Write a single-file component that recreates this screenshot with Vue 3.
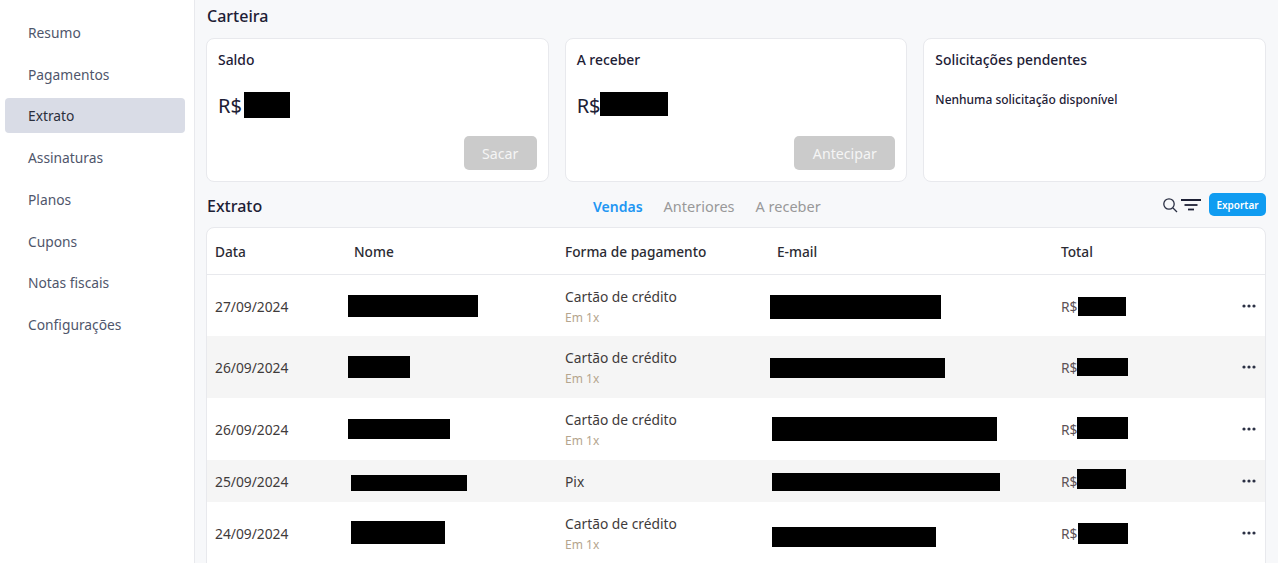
<template>
  <div class="page">
    <aside class="side">
      <a v-for="item in menu" :key="item" class="nav" :class="{ on: item === 'Extrato' }">{{ item }}</a>
    </aside>
    <main class="main">
      <h2 class="title">Carteira</h2>
      <section class="cards">
        <div class="card">
          <h3>Saldo</h3>
          <div class="amount"><span>R$</span><i class="redact saldo"></i></div>
          <button class="disabled sacar">Sacar</button>
        </div>
        <div class="card">
          <h3>A receber</h3>
          <div class="amount"><span>R$</span><i class="redact receber"></i></div>
          <button class="disabled antecipar">Antecipar</button>
        </div>
        <div class="card">
          <h3>Solicitações pendentes</h3>
          <p class="none">Nenhuma solicitação disponível</p>
        </div>
      </section>
      <div class="bar">
        <h2 class="title sub">Extrato</h2>
        <nav class="tabs">
          <span class="active">Vendas</span><span>Anteriores</span><span>A receber</span>
        </nav>
        <div class="tools">
          <svg width="16" height="16" viewBox="0 0 16 16" fill="none" stroke="#2b3044" stroke-width="1.3"><circle cx="7" cy="7" r="5.2"/><path d="M11 11l4 4"/></svg>
          <svg class="filter" width="20" height="12" viewBox="0 0 20 12" fill="none" stroke="#1d2035"><path d="M0 1h20" stroke-width="2"/><path d="M3.5 6h13" stroke-width="1.8"/><path d="M7 10.5h6" stroke-width="1.8"/></svg>
          <button class="export">Exportar</button>
        </div>
      </div>
      <section class="table">
        <div class="row head">
          <div class="c-date">Data</div>
          <div class="c-name head-name">Nome</div>
          <div class="c-pay">Forma de pagamento</div>
          <div class="c-mail head-mail">E-mail</div>
          <div class="c-total head-total">Total</div>
          <div class="c-more"></div>
        </div>
        <div v-for="(r, i) in rows" :key="i" class="row" :class="{ alt: i % 2 === 1, short: !r.sub, first: i === 0 }">
          <div class="c-date">{{ r.date }}</div>
          <div class="c-name"><i class="redact" :style="box(r.name)"></i></div>
          <div class="c-pay">
            <div>{{ r.pay }}</div>
            <div v-if="r.sub" class="subline">{{ r.sub }}</div>
          </div>
          <div class="c-mail"><i class="redact" :style="box(r.mail)"></i></div>
          <div class="c-total"><span class="rs">R$</span><i class="redact" :style="box(r.total)"></i></div>
          <div class="c-more">
            <svg width="14" height="4" viewBox="0 0 14 4" fill="#2b3044"><circle cx="2" cy="2" r="1.6"/><circle cx="7" cy="2" r="1.6"/><circle cx="12" cy="2" r="1.6"/></svg>
          </div>
        </div>
      </section>
    </main>
  </div>
</template>

<script setup>
const menu = ['Resumo', 'Pagamentos', 'Extrato', 'Assinaturas', 'Planos', 'Cupons', 'Notas fiscais', 'Configurações']
const rows = [
  { date: '27/09/2024', name: [0, 130, 22, -0.5], pay: 'Cartão de crédito', sub: 'Em 1x', mail: [0, 171, 24, 0.5], total: [1, 48, 19, 0.5] },
  { date: '26/09/2024', name: [0, 62, 22, 0], pay: 'Cartão de crédito', sub: 'Em 1x', mail: [0, 175, 20, 1], total: [0, 51, 18, 0] },
  { date: '26/09/2024', name: [0, 102, 20, 0], pay: 'Cartão de crédito', sub: 'Em 1x', mail: [2, 225, 24, 0], total: [0, 51, 22, -1] },
  { date: '25/09/2024', name: [3, 116, 16, 2], pay: 'Pix', sub: '', mail: [2, 228, 18, 1], total: [0, 49, 20, -2.5] },
  { date: '24/09/2024', name: [3, 94, 23, -1], pay: 'Cartão de crédito', sub: 'Em 1x', mail: [2, 164, 20, 4], total: [1, 50, 21, 0.5] }
]
function box([left, width, height, top]) {
  return { marginLeft: left + 'px', width: width + 'px', height: height + 'px', marginTop: top * 2 + 'px' }
}
</script>

<style scoped>
.page { display: flex; height: 563px; overflow: hidden; background: #f7f8fa; font-family: "Noto Sans", sans-serif; color: #1d2035; }
.side { flex: none; background: #fff; border-right: 1px solid #e8e9ed; padding: 14.9px 9px 0 5px; display: flex; flex-direction: column; gap: 6.75px; width: 180px; }
.nav { height: 35px; line-height: 35px; padding-left: 23px; font-size: 13.8px; color: #4f566b; border-radius: 4px; }
.nav.on { background: #d9dce6; color: #2b2f3c; }
.main { flex: 1; min-width: 0; padding: 0 12px 0 11px; }
.title { margin: 0; height: 38px; line-height: 32px; font-size: 16px; font-weight: 500; color: #1d2035; padding-left: 1px; }
.cards { display: grid; grid-template-columns: repeat(3, 1fr); gap: 16px; }
.card { position: relative; height: 144px; box-sizing: border-box; background: #fff; border: 1px solid #e8e9ed; border-radius: 8px; padding: 11px; }
.card h3 { margin: 0; font-size: 13.9px; font-weight: 500; line-height: 20px; color: #1d2035; }
.amount { display: flex; align-items: center; margin-top: 22px; height: 26px; font-size: 20px; color: #1d2035; }
.redact { display: block; background: #000; flex: none; }
.saldo { width: 46px; height: 26px; margin-left: 2px; }
.receber { width: 68px; height: 24px; margin-left: -1px; margin-bottom: 2px; }
.disabled { position: absolute; bottom: 11px; right: 11px; height: 34px; border: 0; border-radius: 5px; background: #cbcbcb; color: #f5f5f5; font: 14.2px "Noto Sans", sans-serif; padding: 0; }
.sacar { width: 73px; }
.antecipar { width: 101px; }
.none { margin: 20px 0 0; font-size: 12px; line-height: 20px; font-weight: 500; color: #1d2035; }
.bar { position: relative; height: 45px; display: flex; align-items: center; justify-content: space-between; }
.sub { height: auto; line-height: 48px; margin-top: 2px; }
.tabs { position: absolute; left: 387px; top: 0; line-height: 48px; display: flex; align-items: baseline; gap: 21px; font-size: 14.5px; color: #999; }
.tabs .active { color: #2196f3; font-weight: 600; font-size: 14px; }
.tools { display: flex; align-items: center; gap: 3px; }
.filter { margin-right: 5px; }
.export { width: 57px; height: 23px; border: 0; padding: 0; border-radius: 5px; background: #109cf1; color: #fff; font: 600 10px "Noto Sans", sans-serif; }
.table { background: #fff; border: 1px solid #e8e9ed; border-radius: 8px 8px 0 0; }
.row { display: grid; grid-template-columns: 133px 217px 205px 290px 170px 1fr; align-items: center; height: 62px; font-size: 13.8px; color: #3f3b3b; padding-left: 8px; }
.row.first { height: 60px; padding-top: 1px; }
.row.head { height: 46px; border-bottom: 1px solid #e8e9ed; color: #2b2b33; font-weight: 500; font-size: 13.7px; }
.row.alt { background: #f5f5f5; }
.row.short { height: 42px; }
.head-name { padding-left: 6px; }
.head-mail { padding-left: 7px; }
.subline { font-size: 12px; color: #b5a58e; margin-top: 3px; }
.c-total { display: flex; align-items: center; padding-left: 1px; }
.rs { color: #5d5256; }
.c-more { display: flex; justify-content: flex-end; padding-right: 9px; }
</style>
